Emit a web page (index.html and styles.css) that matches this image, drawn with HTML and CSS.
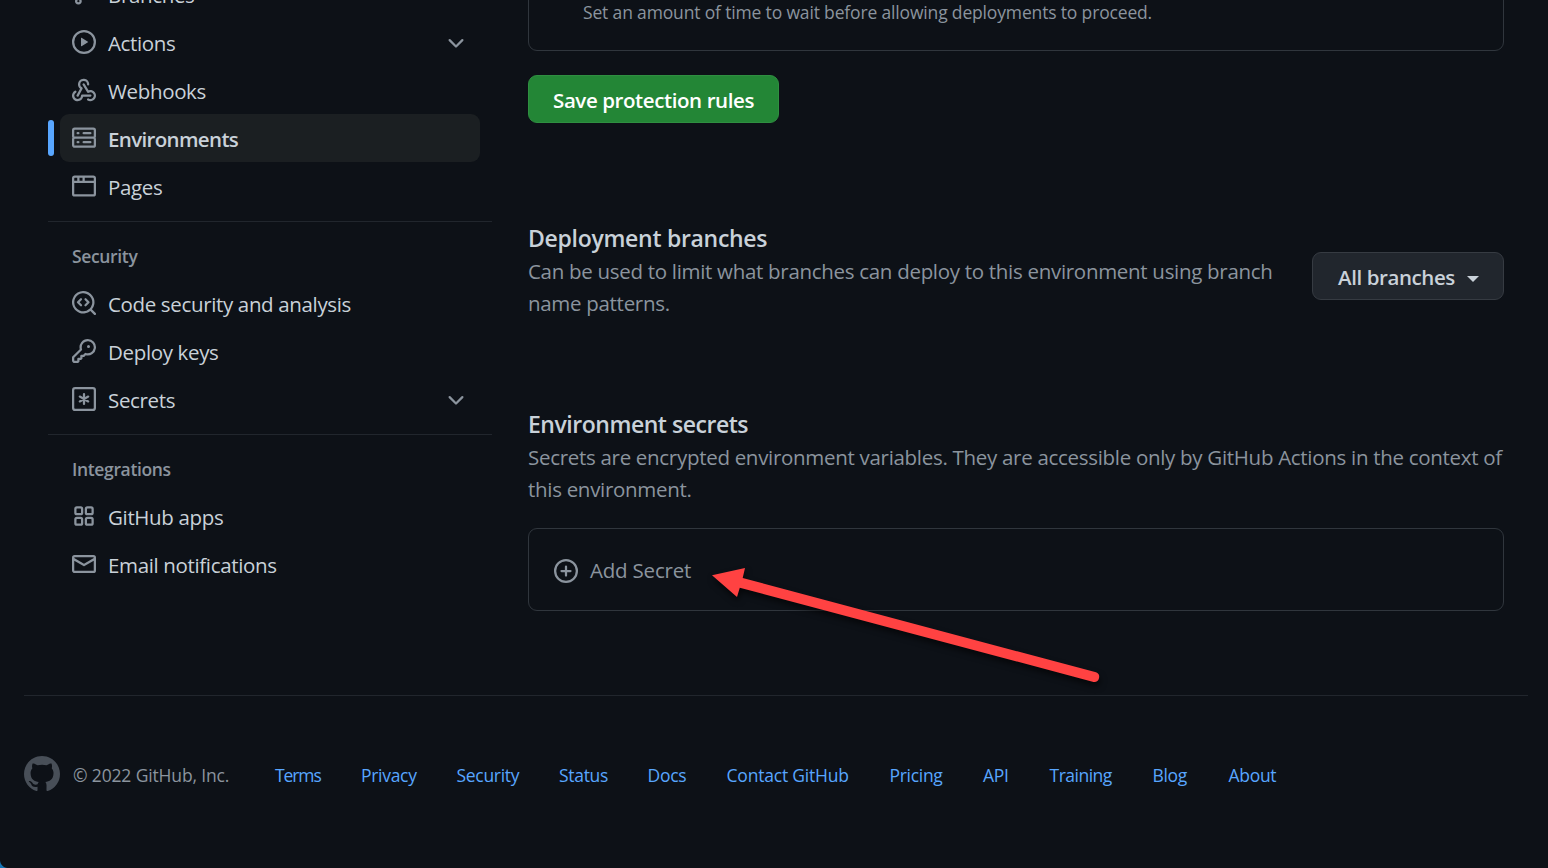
FILE: index.html
```html
<!DOCTYPE html>
<html lang="en">
<head>
<meta charset="utf-8">
<title>Environments settings</title>
<link rel="stylesheet" href="styles.css">
</head>
<body>
<div class="page">
  <div class="columns">
    <nav class="sidebar">
      <a class="item"><svg class="icon" viewBox="0 0 16 16"><path d="M11.75 2.5a.75.75 0 100 1.5.75.75 0 000-1.5zm-2.25.75a2.25 2.25 0 113 2.122V6A2.5 2.5 0 0110 8.5H6a1 1 0 00-1 1v1.128a2.251 2.251 0 11-1.5 0V5.372a2.25 2.25 0 111.5 0v1.836A2.492 2.492 0 016 7h4a1 1 0 001-1v-.628A2.25 2.25 0 019.5 3.25zM4.25 12a.75.75 0 100 1.5.75.75 0 000-1.5zM3.5 3.25a.75.75 0 111.5 0 .75.75 0 01-1.5 0z"/></svg><span class="label">Branches</span></a>
      <a class="item"><svg class="icon" viewBox="0 0 16 16"><path d="M1.5 8a6.5 6.5 0 1113 0 6.5 6.5 0 01-13 0zM8 0a8 8 0 100 16A8 8 0 008 0zM6.379 5.227A.25.25 0 006 5.442v5.117a.25.25 0 00.379.214l4.264-2.559a.25.25 0 000-.428L6.379 5.227z"/></svg><span class="label">Actions</span><svg class="icon chevron" viewBox="0 0 16 16"><path d="M12.78 6.22a.75.75 0 010 1.06l-4.25 4.25a.75.75 0 01-1.06 0L3.22 7.28a.75.75 0 011.06-1.06L8 9.94l3.72-3.72a.75.75 0 011.06 0z"/></svg></a>
      <a class="item"><svg class="icon" viewBox="0 0 16 16"><path d="M5.5 4.25a2.25 2.25 0 014.5 0 .75.75 0 001.5 0 3.75 3.75 0 10-6.14 2.889l-2.272 4.258a.75.75 0 001.324.706L7 7.25a.75.75 0 00-.309-1.015A2.25 2.25 0 015.5 4.25z"/><path d="M7.364 3.607a.75.75 0 011.03.257l2.608 4.349a3.75 3.75 0 11-.628 6.785.75.75 0 01.752-1.299 2.25 2.25 0 10-.033-3.88.75.75 0 01-1.03-.256L7.107 4.636a.75.75 0 01.257-1.03z"/><path d="M2.9 8.776A.75.75 0 012.625 9.8 2.25 2.25 0 106 11.75a.75.75 0 01.75-.751h5.5a.75.75 0 010 1.5H7.425a3.75 3.75 0 11-5.55-3.998.75.75 0 011.024.274z"/></svg><span class="label">Webhooks</span></a>
      <a class="item current"><svg class="icon" viewBox="0 0 16 16"><path fill-rule="evenodd" d="M1.75 1A1.75 1.75 0 000 2.75v4c0 .372.116.717.314 1a1.742 1.742 0 00-.314 1v4c0 .966.784 1.75 1.75 1.75h12.5A1.75 1.75 0 0016 12.75v-4c0-.372-.116-.717-.314-1 .198-.283.314-.628.314-1v-4A1.75 1.75 0 0014.25 1H1.75zm0 7.5a.25.25 0 00-.25.25v4c0 .138.112.25.25.25h12.5a.25.25 0 00.25-.25v-4a.25.25 0 00-.25-.25H1.75zM1.5 2.75a.25.25 0 01.25-.25h12.5a.25.25 0 01.25.25v4a.25.25 0 01-.25.25H1.75a.25.25 0 01-.25-.25v-4zm5.5 2A.75.75 0 017.75 4h4.5a.75.75 0 010 1.5h-4.5A.75.75 0 017 4.75zM7.75 10a.75.75 0 000 1.5h4.5a.75.75 0 000-1.5h-4.5zM3 4.75A.75.75 0 013.75 4h.5a.75.75 0 010 1.5h-.5A.75.75 0 013 4.75zM3.75 10a.75.75 0 000 1.5h.5a.75.75 0 000-1.5h-.5z"/></svg><span class="label">Environments</span></a>
      <a class="item"><svg class="icon" viewBox="0 0 16 16"><path fill-rule="evenodd" d="M0 2.75C0 1.784.784 1 1.75 1h12.5c.966 0 1.75.784 1.75 1.75v10.5A1.75 1.75 0 0114.25 15H1.75A1.75 1.75 0 010 13.25V2.75zm1.75-.25a.25.25 0 00-.25.25V4.5h2v-2H1.75zM5 2.5v2h2v-2H5zm3.5 0v2h6V2.75a.25.25 0 00-.25-.25H8.5zm6 3.5h-13v7.25c0 .138.112.25.25.25h12.5a.25.25 0 00.25-.25V6z"/></svg><span class="label">Pages</span></a>
      <h3 class="group">Security</h3>
      <a class="item"><svg class="icon" viewBox="0 0 16 16"><path d="M8.47 4.97a.75.75 0 000 1.06L9.94 7.5 8.47 8.97a.75.75 0 101.06 1.06l2-2a.75.75 0 000-1.06l-2-2a.75.75 0 00-1.06 0zM6.53 6.03a.75.75 0 00-1.06-1.06l-2 2a.75.75 0 000 1.06l2 2a.75.75 0 101.06-1.06L5.06 7.5l1.47-1.47z"/><path fill-rule="evenodd" d="M12.246 13.307a7.5 7.5 0 111.06-1.06l2.474 2.473a.75.75 0 11-1.06 1.06l-2.474-2.473zM1.5 7.5a6 6 0 1110.386 4.094.75.75 0 00-.292.293A6 6 0 011.5 7.5z"/></svg><span class="label">Code security and analysis</span></a>
      <a class="item"><svg class="icon" viewBox="0 0 16 16"><path fill-rule="evenodd" d="M6.5 5.5a4 4 0 112.731 3.795.75.75 0 00-.768.18L7.44 10.5H6.25a.75.75 0 00-.75.75v1.19l-.06.06H4.25a.75.75 0 00-.75.75v1.19l-.06.06H1.75a.25.25 0 01-.25-.25v-1.69l5.024-5.023a.75.75 0 00.181-.768A3.995 3.995 0 016.5 5.5zm4-5.5a5.5 5.5 0 00-5.348 6.788L.22 11.72a.75.75 0 00-.22.53v2C0 15.216.784 16 1.75 16h2a.75.75 0 00.53-.22l.5-.5a.75.75 0 00.22-.53V14h.75a.75.75 0 00.53-.22l.5-.5a.75.75 0 00.22-.53V12h.75a.75.75 0 00.53-.22l.932-.932A5.5 5.5 0 1010.5 0zm.5 6a1 1 0 100-2 1 1 0 000 2z"/></svg><span class="label">Deploy keys</span></a>
      <a class="item"><svg class="icon line" viewBox="0 0 16 16"><rect x=".75" y=".75" width="14.5" height="14.5" rx="1.300"/><path d="M8 4.75v6.5M5.2 6.4l5.6 3.2M10.8 6.4L5.2 9.6" stroke-linecap="round"/></svg><span class="label">Secrets</span><svg class="icon chevron" viewBox="0 0 16 16"><path d="M12.78 6.22a.75.75 0 010 1.06l-4.25 4.25a.75.75 0 01-1.06 0L3.22 7.28a.75.75 0 011.06-1.06L8 9.94l3.72-3.72a.75.75 0 011.06 0z"/></svg></a>
      <h3 class="group">Integrations</h3>
      <a class="item"><svg class="icon line" viewBox="0 0 16 16"><rect x="2.25" y="2.25" width="4.5" height="4.5" rx="1"/><rect x="9.25" y="2.25" width="4.5" height="4.5" rx="1"/><rect x="2.25" y="9.25" width="4.5" height="4.5" rx="1"/><rect x="9.25" y="9.25" width="4.5" height="4.5" rx="1"/></svg><span class="label">GitHub apps</span></a>
      <a class="item"><svg class="icon" viewBox="0 0 16 16"><path fill-rule="evenodd" d="M1.75 2A1.75 1.75 0 000 3.75v8.5C0 13.216.784 14 1.75 14h12.5A1.75 1.75 0 0016 12.25v-8.5A1.75 1.75 0 0014.25 2H1.75zM14.5 4.07v-.32a.25.25 0 00-.25-.25H1.75a.25.25 0 00-.25.25v.32L8 7.88l6.5-3.81zm-13 1.74v6.441c0 .138.112.25.25.25h12.5a.25.25 0 00.25-.25V5.809L8.38 9.397a.75.75 0 01-.76 0L1.5 5.809z"/></svg><span class="label">Email notifications</span></a>
    </nav>
    <main class="content">
      <div class="box timer"><p class="hint">Set an amount of time to wait before allowing deployments to proceed.</p></div>
      <button class="btn primary"><span>Save protection rules</span></button>
      <section class="branches">
        <div class="copy">
          <h2>Deployment branches</h2>
          <p>Can be used to limit what branches can deploy to this environment using branch<br>name patterns.</p>
        </div>
        <button class="btn select"><span>All branches</span><i class="caret"></i></button>
      </section>
      <section class="secrets">
        <h2>Environment secrets</h2>
        <p>Secrets are encrypted environment variables. They are accessible only by GitHub Actions in the context of<br>this environment.</p>
        <div class="box add"><svg class="icon line" viewBox="0 0 16 16"><circle cx="8" cy="8" r="7.25"/><path d="M8 5v6M5 8h6" stroke-linecap="round"/></svg><span>Add Secret</span></div>
      </section>
    </main>
  </div>
  <footer class="footer">
    <svg class="mark" viewBox="0 0 16 16"><path d="M8 0C3.58 0 0 3.58 0 8c0 3.54 2.29 6.53 5.47 7.59.4.07.55-.17.55-.38 0-.19-.01-.82-.01-1.49-2.01.37-2.53-.49-2.69-.94-.09-.23-.48-.94-.82-1.13-.28-.15-.68-.52-.01-.53.63-.01 1.08.58 1.23.82.72 1.21 1.87.87 2.33.66.07-.52.28-.87.51-1.07-1.78-.2-3.64-.89-3.64-3.95 0-.87.31-1.59.82-2.15-.08-.2-.36-1.02.08-2.12 0 0 .67-.21 2.2.82.64-.18 1.32-.27 2-.27.68 0 1.36.09 2 .27 1.53-1.04 2.2-.82 2.2-.82.44 1.1.16 1.92.08 2.12.51.56.82 1.27.82 2.15 0 3.07-1.87 3.75-3.65 3.95.29.25.54.73.54 1.48 0 1.07-.01 1.93-.01 2.2 0 .21.15.46.55.38A8.013 8.013 0 0016 8c0-4.42-3.58-8-8-8z"/></svg>
    <span class="copyright">© 2022 GitHub, Inc.</span>
    <div class="links"><a>Terms</a><a>Privacy</a><a>Security</a><a>Status</a><a>Docs</a><a>Contact GitHub</a><a>Pricing</a><a>API</a><a>Training</a><a>Blog</a><a>About</a></div>
  </footer>
  <svg class="arrow" viewBox="0 0 420 150"><path d="M12 25.2L45 18l-2.300 10L396 122.300a5 5 0 01-2.500 9.600L39.800 37.700 37 47z"/></svg>
  <i class="corner"></i>
</div>
</body>
</html>
```
FILE: styles.css
```css
* { box-sizing: border-box; }
body {
  margin: 0;
  background: #0d1117;
  color: #c9d1d9;
  font-family: "Open Sans", "Noto Sans", sans-serif;
  font-size: 20.5px;
}
h2, h3, p { margin: 0; }
.page { position: relative; width: 1548px; height: 868px; overflow: hidden; display: flow-root; }
.columns { display: flex; height: 725px; margin-top: -30px; padding: 0 44px 0 48px; gap: 36px; }

.sidebar { width: 444px; flex: none; }
.item {
  position: relative;
  display: flex;
  align-items: center;
  height: 48px;
  margin: 0 12px;
  padding: 0 12px;
  border-radius: 9px;
  letter-spacing: -0.35px;
}
.icon { width: 24px; height: 24px; flex: none; fill: #8b949e; }
.icon.line { fill: none; stroke: #8b949e; stroke-width: 1.5; }
.label { margin-left: 12px; flex: 1; line-height: 32px; padding-top: 1px; white-space: nowrap; }
.current { background: #1b1f22; font-weight: 600; letter-spacing: -0.65px; }
.current::before {
  content: "";
  position: absolute;
  left: -12px;
  top: 6px;
  width: 6px;
  height: 36px;
  border-radius: 3px;
  background: #58a6ff;
}
.group {
  height: 58px;
  margin-top: 11px;
  padding: 20px 24px 0;
  border-top: 1px solid #21262d;
  color: #8b949e;
  font-size: 17.5px;
  font-weight: 600;
  line-height: 28px;
  letter-spacing: -0.35px;
}

.content { width: 976px; flex: none; }
.box { border: 1px solid #30363d; border-radius: 9px; }
.timer { height: 81px; padding: 28px 54px 0; }
.hint { color: #8b949e; font-size: 17.5px; line-height: 27px; letter-spacing: -0.16px; white-space: nowrap; }
.btn {
  display: flex;
  align-items: center;
  justify-content: center;
  height: 48px;
  padding: 0;
  border: 1px solid #363b42;
  border-radius: 9px;
  background: #21262d;
  color: #c9d1d9;
  font: 600 20.5px/30px "Open Sans", "Noto Sans", sans-serif;
  letter-spacing: -0.41px;
  white-space: nowrap;
}
.btn span { padding-top: 1px; }
.primary { width: 251px; margin-top: 24px; background: #238636; border-color: #2f8f41; color: #fff; }
.select { width: 192px; margin-top: 29px; padding-left: 1px; gap: 12px; }
.caret { border: 6px solid transparent; border-top-color: #c9d1d9; border-bottom: 0; margin-top: 6px; }
h2 { margin-top: -1px; font-size: 23px; font-weight: 600; line-height: 32px; letter-spacing: -0.29px; }
.secrets h2 { letter-spacing: -0.47px; }
section p { padding-top: 1px; color: #8b949e; line-height: 32px; letter-spacing: -0.3px; white-space: nowrap; }
.branches { display: flex; justify-content: space-between; height: 186px; margin-top: 100px; }
.add {
  display: flex;
  align-items: center;
  gap: 12px;
  height: 83px;
  margin-top: 23px;
  padding: 2px 25px 0;
  color: #8b949e;
  letter-spacing: -0.2px;
}
.add span { padding-bottom: 2px; }

.footer {
  display: flex;
  align-items: center;
  height: 157px;
  margin: 0 20px 0 24px;
  border-top: 1px solid #21262d;
  font-size: 17.5px;
  letter-spacing: -0.3px;
  white-space: nowrap;
}
.mark { width: 36px; height: 36px; fill: #484f58; flex: none; }
.copyright { width: 202px; margin-left: 13px; padding-top: 1px; color: #8b949e; letter-spacing: -0.15px; }
.links {
  display: grid;
  grid-template-columns: 86px 95.5px 102.5px 88.5px 79px 163px 93.5px 66.5px 103px 76px auto;
  padding-top: 1px;
  color: #58a6ff;
}
.links a:first-child { letter-spacing: -1.1px; }
.links a:nth-child(6) { letter-spacing: -0.2px; }
.links a:nth-child(9) { letter-spacing: -0.5px; }

.arrow {
  position: absolute;
  left: 700px;
  top: 550px;
  width: 420px;
  height: 150px;
  fill: #ff4242;
  filter: drop-shadow(1px 4px 3px rgba(0, 0, 0, 0.6));
}
.corner {
  position: absolute;
  left: 0;
  bottom: 0;
  width: 8px;
  height: 8px;
  background: radial-gradient(circle at 100% 0, transparent 7.5px, #1374b5 8.5px);
}
```
